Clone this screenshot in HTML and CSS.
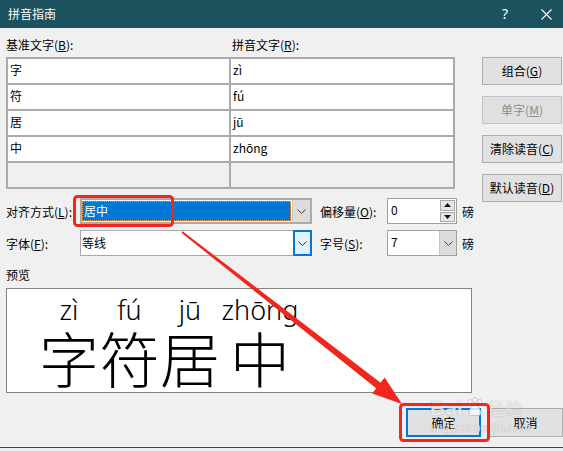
FILE: index.html
```html
<!DOCTYPE html>
<html lang="zh-CN">
<head>
<meta charset="utf-8">
<title>拼音指南</title>
<link rel="stylesheet" href="styles.css">
</head>
<body>
<div class="dialog">
  <div class="titlebar">
    <span class="title">拼音指南</span>
    <span class="help">?</span>
    <span class="close"><svg width="11" height="11" viewBox="0 0 11 11"><path d="M0.5 0.5L10.5 10.5M10.5 0.5L0.5 10.5" stroke="#fff" stroke-width="1.1" fill="none"/></svg></span>
  </div>
  <div class="content">
    <div class="table-area">
      <div class="heads"><span>基准文字(<u>B</u>):</span><span>拼音文字(<u>R</u>):</span></div>
      <div class="table">
        <div class="cell">字</div><div class="cell">zì</div>
        <div class="cell">符</div><div class="cell">fú</div>
        <div class="cell">居</div><div class="cell">jū</div>
        <div class="cell">中</div><div class="cell">zhōng</div>
        <div class="cell empty"></div><div class="cell empty"></div>
      </div>
    </div>
    <div class="side-buttons">
      <div class="btn">组合(<u>G</u>)</div>
      <div class="btn disabled">单字(<u>M</u>)</div>
      <div class="btn">清除读音(<u>C</u>)</div>
      <div class="btn">默认读音(<u>D</u>)</div>
    </div>
    <div class="form">
      <div class="form-row">
        <span class="label">对齐方式(<u>L</u>):</span>
        <div class="combo combo-focus">
          <div class="combo-value"><span class="selected">居中</span></div>
          <div class="combo-arrow"><svg width="9" height="5" viewBox="0 0 9 5"><path d="M0.5 0.5L4.5 4.5L8.5 0.5" stroke="#444" fill="none"/></svg></div>
        </div>
        <span class="label2">偏移量(<u>O</u>):</span>
        <div class="spin">
          <span class="spin-value">0</span>
          <div class="spin-btns">
            <div class="spin-btn"><svg width="7" height="4" viewBox="0 0 7 4"><path d="M0 4L3.5 0L7 4Z" fill="#111"/></svg></div>
            <div class="spin-btn"><svg width="7" height="4" viewBox="0 0 7 4"><path d="M0 0L3.5 4L7 0Z" fill="#111"/></svg></div>
          </div>
        </div>
        <span class="unit">磅</span>
      </div>
      <div class="form-row">
        <span class="label">字体(<u>F</u>):</span>
        <div class="combo combo-hover">
          <div class="combo-value plain">等线</div>
          <div class="combo-arrow"><svg width="9" height="5" viewBox="0 0 9 5"><path d="M0.5 0.5L4.5 4.5L8.5 0.5" stroke="#333" fill="none"/></svg></div>
        </div>
        <span class="label2">字号(<u>S</u>):</span>
        <div class="spin size">
          <span class="spin-value">7</span>
          <div class="size-arrow"><svg width="9" height="5" viewBox="0 0 9 5"><path d="M0.5 0.5L4.5 4.5L8.5 0.5" stroke="#444" fill="none"/></svg></div>
        </div>
        <span class="unit">磅</span>
      </div>
    </div>
  </div>
  <div class="preview-label">预览</div>
  <div class="preview">
    <div class="ruby w1"><span class="rt">zì</span><span class="rb">字</span></div>
    <div class="ruby w2"><span class="rt">fú</span><span class="rb">符</span></div>
    <div class="ruby w1"><span class="rt">jū</span><span class="rb">居</span></div>
    <div class="ruby w4"><span class="rt">zhōng</span><span class="rb">中</span></div>
  </div>
  <div class="footer">
    <div class="btn default">确定</div>
    <div class="btn">取消</div>
  </div>
</div>
<div class="watermark">
  <div class="wm-top"><span class="wm-bai">Bai</span><svg class="wm-paw" width="18" height="20" viewBox="0 0 18 20"><g fill="rgba(255,255,255,0.8)" stroke="rgba(120,120,120,0.45)" stroke-width="0.8"><ellipse cx="4" cy="5" rx="2" ry="2.6"/><ellipse cx="9" cy="3" rx="2" ry="2.6"/><ellipse cx="14" cy="5" rx="2" ry="2.6"/><path d="M3 16C3 11 7 8 9 8C11 8 15 11 15 16C15 19 12 19 9 18C6 19 3 19 3 16Z"/></g></svg><span class="wm-jy">经验</span></div>
  <div class="wm-url">jingyan.baidu.com</div>
</div>
<svg class="annot" width="563" height="451" viewBox="0 0 563 451">
  <rect x="74.5" y="196.5" width="98" height="29" rx="3" fill="none" stroke="#f2261c" stroke-width="3"/>
  <rect x="400.5" y="404.5" width="88" height="36" rx="3" fill="none" stroke="#f2261c" stroke-width="3"/>
  <polygon points="182.6,231.2 380.6,382.7 384.6,377.6 402,404 372.2,393.4 376.2,388.3 181.4,232.8" fill="#f2261c"/>
</svg>
</body>
</html>
```
FILE: styles.css
```css
* { box-sizing: border-box; }
html, body { margin: 0; padding: 0; }
body {
  width: 563px;
  height: 451px;
  overflow: hidden;
  position: relative;
  background: #e9eef0;
  font-family: "Noto Sans CJK SC", "Noto Sans", sans-serif;
  font-size: 12px;
  color: #000;
}
u { text-decoration: underline; text-underline-offset: 1px; }
.dialog {
  height: 448px;
  background: #f0f0f0;
  border-bottom: 1px solid #1b525e;
  display: flex;
  flex-direction: column;
}
.titlebar {
  height: 28px;
  flex: none;
  background: #1b525e;
  color: #fff;
  display: flex;
  align-items: center;
  padding-left: 8px;
  line-height: 16px;
}
.title { flex: 1; }
.help { width: 44px; text-align: center; font-size: 14px; font-family: "Noto Sans", sans-serif; }
.close { width: 36px; display: flex; justify-content: flex-end; padding-right: 11px; }
.close svg { display: block; }

.content {
  display: grid;
  grid-template-columns: 449px 27px 80px;
  padding-left: 6px;
  margin-top: 9px;
  row-gap: 9px;
}
.table-area { grid-column: 1; grid-row: 1; }
.heads {
  display: grid;
  grid-template-columns: 226px 1fr;
  height: 16px;
  line-height: 16px;
  margin-bottom: 4px;
}
.table {
  display: grid;
  grid-template-columns: 221px 222px;
  grid-auto-rows: 24px;
  gap: 2px;
  padding: 2px;
  background: #ababab;
}
.cell {
  background: #fff;
  padding-left: 2px;
  line-height: 22px;
}
.cell.empty { background: #f0f0f0; }

.side-buttons {
  grid-column: 3;
  grid-row: 1 / span 2;
  padding-top: 20px;
  display: flex;
  flex-direction: column;
  gap: 11px;
  align-self: start;
}
.btn {
  height: 28px;
  background: #e1e1e1;
  border: 1px solid #adadad;
  display: flex;
  align-items: center;
  justify-content: center;
  line-height: 16px;
}
.btn.disabled { color: #8c8c8c; border-color: #c2c2c2; background: #e0e0e0; }

.form {
  grid-column: 1 / span 2;
  grid-row: 2;
  display: flex;
  flex-direction: column;
  gap: 6px;
}
.form-row {
  height: 26px;
  display: flex;
  align-items: center;
}
.label { width: 74px; }
.label2 { width: 67px; margin-left: 8px; }
.unit { margin-left: 5px; }
.combo {
  width: 232px;
  height: 26px;
  display: flex;
  background: #fff;
}
.combo-focus { border: 2px solid #ababab; }
.combo-hover { border: 1px solid #a8a8a8; }
.combo-value { flex: 1; padding: 1px 1px 1px 0; display: flex; }
.combo-value.plain { padding-left: 1px; align-items: center; line-height: 16px; }
.selected {
  flex: 1;
  background: #0078d7;
  color: #fff;
  outline: 1px dotted #f0a040;
  outline-offset: -1px;
  padding-left: 2px;
  line-height: 20px;
}
.combo-arrow {
  width: 18px;
  display: flex;
  align-items: center;
  justify-content: center;
}
.combo-focus .combo-arrow { background: #dcdcdc; border-left: 1px solid #c8c8c8; }
.combo-hover .combo-arrow { background: #e5f1fb; border: 2px solid #0078d7; margin: -1px -1px -1px 0; width: 19px; }
.combo svg, .spin svg { display: block; }

.spin {
  width: 70px;
  height: 26px;
  border: 1px solid #a0a0a0;
  background: #fff;
  display: flex;
}
.spin-value { flex: 1; padding-left: 3px; line-height: 22px; }
.spin-btns {
  width: 16px;
  padding: 1px 1px 1px 0;
  display: flex;
  flex-direction: column;
  gap: 1px;
}
.spin-btn {
  flex: 1;
  background: #e6e6e6;
  border: 1px solid #a8a8a8;
  display: flex;
  align-items: center;
  justify-content: center;
}
.size-arrow {
  width: 17px;
  background: #dcdcdc;
  border-left: 1px solid #c8c8c8;
  display: flex;
  align-items: center;
  justify-content: center;
}

.preview-label {
  margin: 11px 0 0 6px;
  height: 16px;
  line-height: 16px;
}
.preview {
  margin: 5px 0 0 6px;
  width: 466px;
  height: 105px;
  flex: none;
  border: 1px solid #828282;
  background: #fff;
  display: flex;
  padding: 6px 0 0 32px;
}
.ruby { display: flex; flex-direction: column; align-items: center; }
.w1 { width: 60px; }
.w2 { width: 61px; }
.w4 { width: 80px; }
.rt {
  font-family: "Noto Sans", sans-serif;
  font-weight: 300;
  font-size: 27px;
  line-height: 30px;
  height: 30px;
  white-space: nowrap;
}
.rb {
  font-family: "Noto Sans CJK SC", sans-serif;
  font-weight: 300;
  font-size: 60px;
  line-height: 60px;
  height: 60px;
  margin-top: 2px;
}

.footer {
  margin-top: 15px;
  display: flex;
  justify-content: flex-end;
  gap: 7px;
}
.footer .btn { width: 75px; height: 29px; }
.btn.default { border: 2px solid #0078d7; }

.annot { position: absolute; left: 0; top: 0; pointer-events: none; }
.watermark {
  position: absolute;
  left: 430px;
  top: 395px;
  color: rgba(255, 255, 255, 0.75);
  text-shadow: 0 0 1px rgba(90, 90, 90, 0.5);
  pointer-events: none;
}
.wm-top { display: flex; align-items: flex-end; height: 24px; }
.wm-bai { font-family: "Liberation Sans", sans-serif; font-weight: bold; font-size: 21px; line-height: 22px; }
.wm-paw { margin: 0 2px 2px 3px; }
.wm-jy { font-size: 17px; line-height: 22px; margin-left: 2px; }
.wm-url { font-family: "Liberation Sans", sans-serif; font-size: 12px; line-height: 14px; margin-top: 2px; letter-spacing: 0.3px; }
```
